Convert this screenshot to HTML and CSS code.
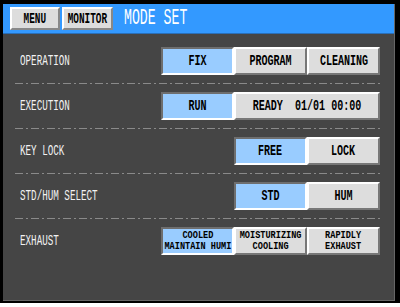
FILE: index.html
```html
<!DOCTYPE html>
<html lang="en">
<head>
	<meta charset="UTF-8">
	<title>MODE SET</title>
	<link rel="stylesheet" href="styles.css">
</head>
<body>
	<div class="screen">
		<div class="panel">
			<!-- title bar -->
			<div class="titlebar">
				<div class="tbtn tbtn-menu"><span class="t">MENU</span></div>
				<div class="tbtn tbtn-monitor"><span class="t">MONITOR</span></div>
				<div class="title"><span class="t">MODE SET</span></div>
			</div>

			<div class="rows">
				<div class="row">
					<div class="label"><span class="t">OPERATION</span></div>
					<div class="group">
						<div class="btn on"><span class="t">FIX</span></div>
						<div class="btn"><span class="t">PROGRAM</span></div>
						<div class="btn"><span class="t">CLEANING</span></div>
					</div>
				</div>
				<div class="sep"></div>
				<div class="row">
					<div class="label"><span class="t">EXECUTION</span></div>
					<div class="group">
						<div class="btn on"><span class="t">RUN</span></div>
						<div class="btn btn-wide"><span class="t">READY&nbsp;&nbsp;01/01 00:00</span></div>
					</div>
				</div>
				<div class="sep"></div>
				<div class="row">
					<div class="label"><span class="t">KEY LOCK</span></div>
					<div class="group">
						<div class="btn on"><span class="t">FREE</span></div>
						<div class="btn"><span class="t">LOCK</span></div>
					</div>
				</div>
				<div class="sep"></div>
				<div class="row">
					<div class="label"><span class="t">STD/HUM SELECT</span></div>
					<div class="group">
						<div class="btn on"><span class="t">STD</span></div>
						<div class="btn"><span class="t">HUM</span></div>
					</div>
				</div>
				<div class="sep"></div>
				<div class="row">
					<div class="label"><span class="t">EXHAUST</span></div>
					<div class="group">
						<div class="btn btn-two on"><span class="t">COOLED<br>MAINTAIN HUMI</span></div>
						<div class="btn btn-two"><span class="t">MOISTURIZING<br>COOLING</span></div>
						<div class="btn btn-two"><span class="t">RAPIDLY<br>EXHAUST</span></div>
					</div>
				</div>
			</div>
		</div>
	</div>
</body>
</html>
```

FILE: styles.css
```css
body{
	margin: 0;
	background: white;
	font-family: "Liberation Mono", "DejaVu Sans Mono", monospace;
}
/* condensed look of the panel font */
.t{
	display: inline-block;
	white-space: nowrap;
	transform: scaleX(0.67);
}
.screen{
	width: 400px;
	height: 303px;
	box-sizing: border-box;
	background: black;
	padding: 4px 5px 2px 3px;
}
.panel{
	height: 100%;
	box-sizing: border-box;
	background: #454545;
	border-right: 1px solid #666;
	border-bottom: 1px solid #666;
}
.titlebar{
	height: 30px;
	box-sizing: border-box;
	background: #3399ff;
	border-bottom: 1px solid #2a6fb8;
	display: flex;
	align-items: center;
	padding-left: 7px;
	gap: 2px;
}
.tbtn{
	height: 23px;
	box-sizing: border-box;
	background: #dddddd;
	border: 2px solid;
	border-color: #ffffff #888888 #888888 #ffffff;
	display: flex;
	align-items: center;
	justify-content: center;
	font-size: 14px;
	font-weight: bold;
	color: black;
}
.tbtn-menu{
	width: 50px;
}
.tbtn-monitor{
	width: 51px;
}
.title{
	width: 100px;
	margin-left: 9px;
	color: white;
	font-size: 22px;
}
.title .t{
	transform: scaleX(0.6);
	transform-origin: left center;
}
.rows{
	padding: 5px 14px 0 12px;
}
.row{
	height: 44px;
	display: flex;
	align-items: center;
	justify-content: space-between;
}
.label{
	padding-left: 5px;
	color: #f2f2f2;
	font-size: 14px;
}
.label .t{
	transform: scaleX(0.66);
	transform-origin: left center;
}
.sep{
	height: 1px;
	background: repeating-linear-gradient(to right, #8a8a8a 0 8px, transparent 8px 11px, #8a8a8a 11px 13px, transparent 13px 16px);
}
.group{
	display: flex;
}
.btn{
	width: 73px;
	height: 28px;
	box-sizing: border-box;
	background: #dddddd;
	border: 2px solid;
	border-color: #ffffff #777777 #777777 #ffffff;
	display: flex;
	align-items: center;
	justify-content: center;
	text-align: center;
	font-size: 15px;
	font-weight: bold;
	color: black;
}
.btn.on{
	background: #99ccff;
	border-color: #6e6e6e #ffffff #ffffff #6e6e6e;
}
.btn-wide{
	width: 146px;
}
.btn-two{
	font-size: 11px;
	line-height: 11px;
}
.btn-two .t{
	transform: scaleX(0.78);
}
```
